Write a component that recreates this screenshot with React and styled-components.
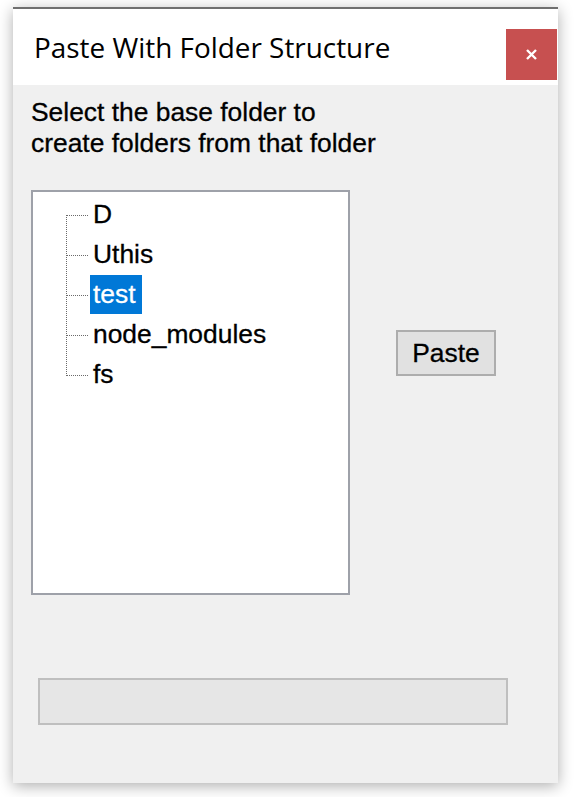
import React from "react";
import styled, { createGlobalStyle } from "styled-components";

const Global = createGlobalStyle`
  html, body { margin: 0; padding: 0; background: #ffffff; }
  body { width: 574px; height: 797px; overflow: hidden; }
`;

const Page = styled.div`
  padding: 7px 0 0 13px;
`;

const Window = styled.div`
  width: 545px;
  height: 776px;
  box-sizing: border-box;
  background: #f0f0f0;
  border-top: 2px solid #6f6f6f;
  box-shadow: 0 3px 14px rgba(0, 0, 0, 0.32);
  display: flex;
  flex-direction: column;
`;

const TitleBar = styled.div`
  height: 76px;
  box-sizing: border-box;
  background: #ffffff;
  display: flex;
  align-items: flex-start;
  justify-content: space-between;
  padding: 20px 1px 0 21px;
`;

const Title = styled.div`
  font-family: "Open Sans", "Noto Sans", sans-serif;
  font-size: 27.9px;
  line-height: 34px;
  color: #000000;
  margin-top: 1px;
`;

const CloseButton = styled.div`
  width: 51px;
  height: 51px;
  background: #c75050;
  display: flex;
  align-items: center;
  justify-content: center;
`;

const Body = styled.div`
  flex: 1;
  padding: 12px 0 0 18px;
  display: flex;
  flex-direction: column;
  font-family: "Liberation Sans", Arial, sans-serif;
  font-size: 26.4px;
  color: #000000;
  -webkit-text-stroke: 0.3px #000000;
`;

const Prompt = styled.div`
  line-height: 31px;
`;

const Row = styled.div`
  display: flex;
  align-items: flex-start;
  margin-top: 31px;
`;

const TreeBox = styled.div`
  width: 319px;
  height: 405px;
  box-sizing: border-box;
  background: #ffffff;
  border: 2px solid #9ea1a9;
  padding: 3px 0 0 33px;
`;

const Node = styled.div`
  display: flex;
  align-items: stretch;
  height: 40px;
`;

const NodeLabel = styled.span`
  line-height: 39px;
  height: 39px;
  padding: 0 6px 0 3px;
  background: ${(p) => (p.$selected ? "#0078d7" : "transparent")};
  color: ${(p) => (p.$selected ? "#ffffff" : "#000000")};
  -webkit-text-stroke: 0.3px ${(p) => (p.$selected ? "#ffffff" : "#000000")};
`;

const PasteButton = styled.button`
  margin: 140px 0 0 46px;
  width: 100px;
  height: 46px;
  box-sizing: border-box;
  background: #e1e1e1;
  border: 2px solid #adadad;
  font-family: "Liberation Sans", Arial, sans-serif;
  font-size: 26.4px;
  color: #000000;
  -webkit-text-stroke: 0.3px #000000;
  padding: 0;
  line-height: 40px;
`;

const Progress = styled.div`
  margin: 83px 0 0 7px;
  width: 470px;
  height: 47px;
  box-sizing: border-box;
  background: #e6e6e6;
  border: 2px solid #bfbfbf;
`;

function Connector({ first, last }) {
  return (
    <svg width="24" height="40" viewBox="0 0 24 40" style={{ flex: "none" }}>
      <line
        x1="0.5"
        y1={first ? 20 : 0}
        x2="0.5"
        y2={last ? 21 : 40}
        stroke="#6a6a6a"
        strokeWidth="1"
        strokeDasharray="1 1"
      />
      <line
        x1="1"
        y1="20.5"
        x2="23"
        y2="20.5"
        stroke="#6a6a6a"
        strokeWidth="1"
        strokeDasharray="1 1"
      />
    </svg>
  );
}

const nodes = ["D", "Uthis", "test", "node_modules", "fs"];

export default function App() {
  return (
    <>
      <Global />
      <Page>
        <Window>
          <TitleBar>
            <Title>Paste With Folder Structure</Title>
            <CloseButton>
              <svg width="11" height="11" viewBox="0 0 11 11">
                <path d="M1 1 L10 10 M10 1 L1 10" stroke="#ffffff" strokeWidth="2.4" />
              </svg>
            </CloseButton>
          </TitleBar>
          <Body>
            <Prompt>
              Select the base folder to
              <br />
              create folders from that folder
            </Prompt>
            <Row>
              <TreeBox>
                {nodes.map((n, i) => (
                  <Node key={n}>
                    <Connector first={i === 0} last={i === nodes.length - 1} />
                    <NodeLabel $selected={n === "test"}>{n}</NodeLabel>
                  </Node>
                ))}
              </TreeBox>
              <PasteButton>Paste</PasteButton>
            </Row>
            <Progress />
          </Body>
        </Window>
      </Page>
    </>
  );
}
